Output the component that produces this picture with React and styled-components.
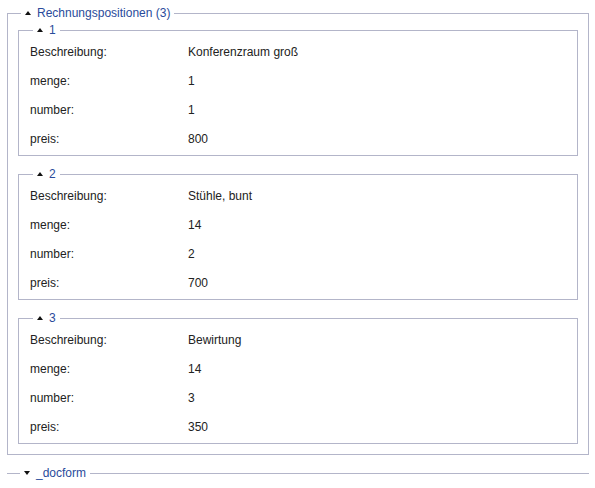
import React from 'react';
import styled, { createGlobalStyle } from 'styled-components';

const GlobalStyle = createGlobalStyle`
  body {
    margin: 0;
    background: #fff;
    font-family: "Liberation Sans", Arial, sans-serif;
    font-size: 12px;
    color: #222;
  }
`;

const Page = styled.div`
  padding: 6px 6px 0 7px;
`;

const Group = styled.fieldset`
  margin: 0;
  padding: 3px 10px 10px 10px;
  border: 1px solid #b3b5c9;
  min-width: 0;
`;

const Collapsed = styled.fieldset`
  margin: 11px 0 0 0;
  padding: 0 10px;
  border: 0;
  border-top: 1px solid #b3b5c9;
  min-width: 0;
`;

const Item = styled.fieldset`
  margin: 0 0 11px 0;
  padding: 0 10px 2px 11px;
  border: 1px solid #b3b5c9;
  min-width: 0;
  &:last-child {
    margin-bottom: 0;
  }
`;

const Legend = styled.legend`
  margin-left: 3px;
  padding: 0 4px;
  height: 14px;
  line-height: 14px;
  color: #2a4b9b;
  display: flex;
  align-items: center;
  gap: 6px;
  cursor: pointer;
`;

const Arrow = styled.span`
  display: inline-block;
  width: 0;
  height: 0;
  border-left: 3.5px solid transparent;
  border-right: 3.5px solid transparent;
  ${(p) =>
    p.$down
      ? 'border-top: 4px solid #111;'
      : 'border-bottom: 4px solid #111;'}
  margin-bottom: 1px;
`;

const Row = styled.div`
  display: grid;
  grid-template-columns: 158px 1fr;
  height: 29px;
  align-items: center;
`;

const Label = styled.span`
  color: #222;
`;

const Value = styled.span`
  color: #222;
`;

const items = [
  { n: 1, beschreibung: 'Konferenzraum groß', menge: 1, number: 1, preis: 800 },
  { n: 2, beschreibung: 'Stühle, bunt', menge: 14, number: 2, preis: 700 },
  { n: 3, beschreibung: 'Bewirtung', menge: 14, number: 3, preis: 350 },
];

function Position({ item }) {
  return (
    <Item>
      <Legend>
        <Arrow />
        {item.n}
      </Legend>
      <Row>
        <Label>Beschreibung:</Label>
        <Value>{item.beschreibung}</Value>
      </Row>
      <Row>
        <Label>menge:</Label>
        <Value>{item.menge}</Value>
      </Row>
      <Row>
        <Label>number:</Label>
        <Value>{item.number}</Value>
      </Row>
      <Row>
        <Label>preis:</Label>
        <Value>{item.preis}</Value>
      </Row>
    </Item>
  );
}

export default function App() {
  return (
    <Page>
      <GlobalStyle />
      <Group>
        <Legend>
          <Arrow />
          Rechnungspositionen (3)
        </Legend>
        {items.map((item) => (
          <Position key={item.n} item={item} />
        ))}
      </Group>
      <Collapsed>
        <Legend>
          <Arrow $down />
          _docform
        </Legend>
      </Collapsed>
    </Page>
  );
}
